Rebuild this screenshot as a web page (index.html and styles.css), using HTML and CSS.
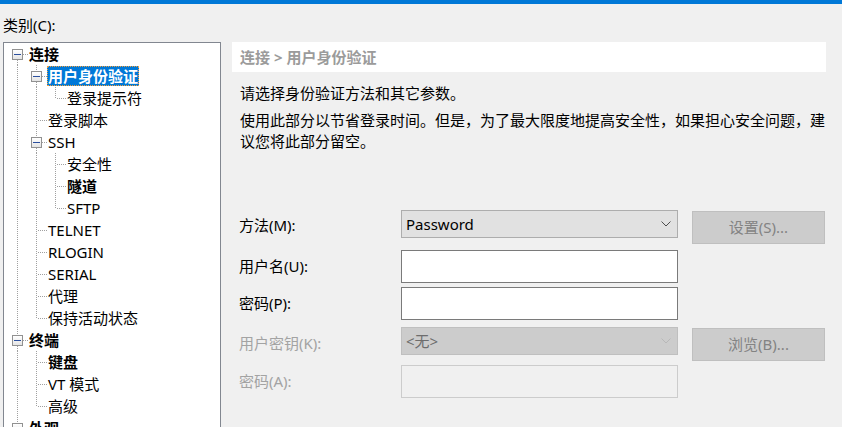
FILE: index.html
```html
<!DOCTYPE html>
<html lang="zh-CN">
<head>
<meta charset="utf-8">
<title>会话属性</title>
<link rel="stylesheet" href="styles.css">
</head>
<body>
<div class="topbar"></div>
<div class="main">
  <div class="left">
    <div class="cat-label">类别(C):</div>
    <div class="tree">
      <div class="row"><span class="c x x-d"><span class="exp"></span></span><span class="lbl b">连接</span></div>
      <div class="row"><span class="c v"></span><span class="c x x-ud"><span class="exp"></span></span><span class="lbl b sel">用户身份验证</span></div>
      <div class="row"><span class="c v"></span><span class="c v"></span><span class="c l"></span><span class="lbl">登录提示符</span></div>
      <div class="row"><span class="c v"></span><span class="c t"></span><span class="lbl">登录脚本</span></div>
      <div class="row"><span class="c v"></span><span class="c x x-ud"><span class="exp"></span></span><span class="lbl">SSH</span></div>
      <div class="row"><span class="c v"></span><span class="c v"></span><span class="c t"></span><span class="lbl">安全性</span></div>
      <div class="row"><span class="c v"></span><span class="c v"></span><span class="c t"></span><span class="lbl b">隧道</span></div>
      <div class="row"><span class="c v"></span><span class="c v"></span><span class="c l"></span><span class="lbl">SFTP</span></div>
      <div class="row"><span class="c v"></span><span class="c t"></span><span class="lbl">TELNET</span></div>
      <div class="row"><span class="c v"></span><span class="c t"></span><span class="lbl">RLOGIN</span></div>
      <div class="row"><span class="c v"></span><span class="c t"></span><span class="lbl">SERIAL</span></div>
      <div class="row"><span class="c v"></span><span class="c t"></span><span class="lbl">代理</span></div>
      <div class="row"><span class="c v"></span><span class="c l"></span><span class="lbl">保持活动状态</span></div>
      <div class="row"><span class="c x x-ud"><span class="exp"></span></span><span class="lbl b">终端</span></div>
      <div class="row"><span class="c v"></span><span class="c t"></span><span class="lbl b">键盘</span></div>
      <div class="row"><span class="c v"></span><span class="c t"></span><span class="lbl">VT 模式</span></div>
      <div class="row"><span class="c v"></span><span class="c l"></span><span class="lbl">高级</span></div>
      <div class="row"><span class="c x x-ud"><span class="exp"></span></span><span class="lbl b">外观</span></div>
    </div>
  </div>
  <div class="right">
    <div class="crumb">连接 &gt; 用户身份验证</div>
    <p class="intro">请选择身份验证方法和其它参数。</p>
    <p class="desc">使用此部分以节省登录时间。但是，为了最大限度地提高安全性，如果担心安全问题，建议您将此部分留空。</p>
    <div class="form">
      <div class="frow r1">
        <label class="flabel">方法(M):</label>
        <div class="select"><span>Password</span><svg class="chev" width="10" height="6" viewBox="0 0 10 6"><polyline points="0.5,0.5 5,5 9.5,0.5" fill="none" stroke="#4d4d4d" stroke-width="1"/></svg></div>
        <div class="btn">设置(S)...</div>
      </div>
      <div class="frow r2">
        <label class="flabel">用户名(U):</label>
        <div class="input"></div>
      </div>
      <div class="frow r3">
        <label class="flabel">密码(P):</label>
        <div class="input"></div>
      </div>
      <div class="frow r4">
        <label class="flabel dis">用户密钥(K):</label>
        <div class="select disabled"><span>&lt;无&gt;</span><svg class="chev" width="10" height="6" viewBox="0 0 10 6"><polyline points="0.5,0.5 5,5 9.5,0.5" fill="none" stroke="#b8b8b8" stroke-width="1"/></svg></div>
        <div class="btn">浏览(B)...</div>
      </div>
      <div class="frow r5">
        <label class="flabel dis">密码(A):</label>
        <div class="input disabled"></div>
      </div>
    </div>
  </div>
</div>
</body>
</html>
```

FILE: styles.css
```css
* { box-sizing: border-box; }
html, body { margin: 0; padding: 0; }
body {
  width: 842px;
  height: 427px;
  overflow: hidden;
  background: #f0f0f0;
  font-family: "Noto Sans", "Noto Sans CJK SC", sans-serif;
  font-size: 15px;
  color: #000;
}
.topbar { height: 4px; background: #0078d7; }
.main { display: flex; align-items: flex-start; }

/* left column */
.left { width: 218px; margin-left: 3px; margin-top: 11px; flex: none; }
.cat-label { height: 20px; line-height: 20px; }
.tree {
  margin-top: 7px;
  height: 400px;
  background: #fff;
  border: 1px solid #828790;
  padding-left: 5px;
}
.row { display: flex; align-items: flex-start; height: 22px; }
.c {
  --dv: repeating-linear-gradient(to bottom, #a0a0a0 0 1px, transparent 1px 2px);
  --dh: repeating-linear-gradient(to right, #a0a0a0 0 1px, transparent 1px 2px);
  flex: none;
  width: 19px;
  height: 22px;
  background-repeat: no-repeat;
}
.v { background-image: var(--dv); background-position: 8px 0; background-size: 1px 22px; }
.t {
  background-image: var(--dv), var(--dh);
  background-position: 8px 0, 10px 11px;
  background-size: 1px 22px, 9px 1px;
}
.l {
  background-image: var(--dv), var(--dh);
  background-position: 8px 0, 10px 11px;
  background-size: 1px 12px, 9px 1px;
}
.x { display: flex; align-items: flex-start; }
.x-d {
  background-image: var(--dv), var(--dh);
  background-position: 8px 17px, 14px 11px;
  background-size: 1px 5px, 5px 1px;
}
.x-ud {
  background-image: var(--dv), var(--dv), var(--dh);
  background-position: 8px 0, 8px 17px, 14px 11px;
  background-size: 1px 6px, 1px 5px, 5px 1px;
}
.exp {
  width: 11px;
  height: 11px;
  margin: 6px 0 0 3px;
  border: 1px solid #919191;
  background:
    linear-gradient(#2b4f9e, #2b4f9e) center / 7px 1px no-repeat,
    linear-gradient(#ffffff, #e4e4e4);
}
.lbl {
  margin-top: 1px;
  height: 20px;
  line-height: 20px;
  padding: 0 1px;
  white-space: nowrap;
}
.lbl.b { font-weight: bold; }
.lbl.sel {
  background: #0078d7;
  color: #fff;
  outline: 1px dotted #f0a040;
  outline-offset: -1px;
}

/* right column */
.right { width: 594px; margin-left: 11px; padding-top: 38px; flex: none; }
.crumb {
  height: 30px;
  line-height: 30px;
  background: #fff;
  padding-left: 8px;
  color: #9b9b9b;
  font-weight: bold;
}
.intro { margin: 11px 0 0; padding-left: 8px; line-height: 21px; }
.desc { margin: 6px 0 0; padding-left: 8px; line-height: 21px; width: 594px; }

.form { margin-top: 58px; padding-left: 7px; }
.frow { display: flex; align-items: flex-start; }
.r1 { height: 40px; }
.r2 { height: 37px; }
.r3 { height: 40px; }
.r4 { height: 38px; }
.r5 { height: 33px; }
.flabel { width: 162px; flex: none; white-space: nowrap; }
.r1 .flabel { padding-top: 1px; line-height: 28px; }
.r2 .flabel, .r3 .flabel, .r5 .flabel { line-height: 33px; }
.r4 .flabel { padding-top: 2px; line-height: 28px; }
.flabel.dis { color: #a3a3a3; }

.select {
  width: 277px;
  height: 28px;
  flex: none;
  display: flex;
  align-items: center;
  justify-content: space-between;
  padding: 0 6px 0 4px;
  background: #e1e1e1;
  border: 1px solid #adadad;
  line-height: 26px;
}
.select.disabled { background: #cccccc; border-color: #bfbfbf; color: #6d6d6d; }
.chev { display: block; }
.input {
  width: 277px;
  height: 33px;
  flex: none;
  background: #fff;
  border: 1px solid #7a7a7a;
}
.input.disabled { background: #f0f0f0; border-color: #cccccc; }
.btn {
  width: 133px;
  height: 33px;
  flex: none;
  margin-left: 14px;
  margin-top: 1px;
  background: #cccccc;
  border: 1px solid #bfbfbf;
  color: #838383;
  text-align: center;
  line-height: 31px;
}
```
